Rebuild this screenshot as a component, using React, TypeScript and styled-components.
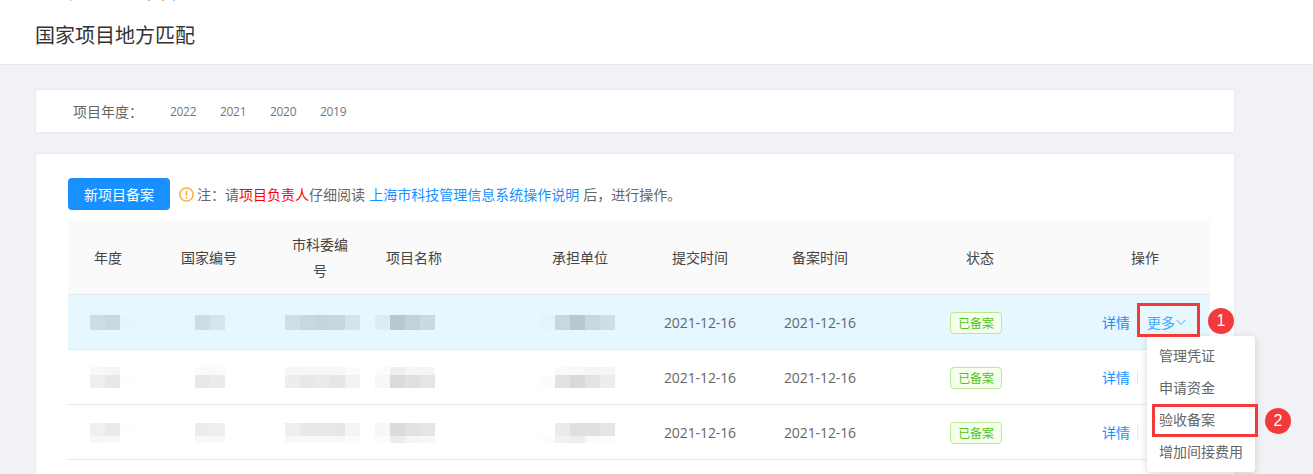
import React from "react";
import styled, { createGlobalStyle } from "styled-components";

const GlobalStyle = createGlobalStyle`
  html, body {
    margin: 0;
    padding: 0;
    height: 474px;
    overflow: hidden;
    background: #f0f2f5;
    font-family: "Noto Sans CJK SC", "Open Sans", sans-serif;
    font-size: 14px;
    color: #666;
  }
  * { box-sizing: border-box; }
`;

const COLUMNS = "80px 122px 100px 150px 120px 120px 120px 200px 130px";

const PageHeader = styled.header`
  height: 65px;
  background: #fff;
  border-bottom: 1px solid #e8e8e8;
  padding: 21px 35px 0;
`;

const Title = styled.h1`
  margin: 0;
  font-size: 20px;
  font-weight: 400;
  line-height: 28px;
  color: #333;
`;

const Content = styled.main`
  width: 1200px;
  margin: 24px 0 0 35px;
  display: flex;
  flex-direction: column;
  gap: 20px;
`;

const FilterCard = styled.section`
  height: 44px;
  background: #fff;
  border: 1px solid #e8eaed;
  border-radius: 2px;
  display: flex;
  align-items: center;
  padding-left: 37px;
`;

const FilterLabel = styled.span`
  width: 97px;
  color: #666;
`;

const YearList = styled.div`
  display: flex;
  font-family: "Open Sans", sans-serif;
  font-size: 12px;
  letter-spacing: -0.3px;
  color: #777;
`;

const Year = styled.span`
  width: 50px;
`;

const TableCard = styled.section`
  background: #fff;
  border: 1px solid #e8eaed;
  border-radius: 2px;
  padding: 24px 24px 40px 32px;
  height: 331px;
`;

const Toolbar = styled.div`
  height: 32px;
  display: flex;
  align-items: center;
  margin-bottom: 10px;
`;

const PrimaryButton = styled.button`
  width: 102px;
  height: 32px;
  border: 0;
  border-radius: 4px;
  background: #1890ff;
  color: #fff;
  font: inherit;
  margin-right: 10px;
  padding: 0;
`;

const Notice = styled.div`
  display: flex;
  align-items: center;
  gap: 3px;
  color: #666;
  word-spacing: 1px;
`;

const Highlight = styled.span<{ $color: string }>`
  color: ${(p) => p.$color};
`;

const HeadRow = styled.div`
  display: grid;
  grid-template-columns: ${COLUMNS};
  height: 75px;
  background: #fafafa;
  border-bottom: 1px solid #e8e8e8;
  color: #444;
`;

const HeadCell = styled.div<{ $left?: boolean; $inset?: number }>`
  display: flex;
  align-items: center;
  justify-content: ${(p) => (p.$left ? "flex-start" : "center")};
  text-align: center;
  line-height: 26px;
  padding: 0 ${(p) => p.$inset ?? 0}px;
  padding-right: ${(p) => (p.$left ? 0 : p.$inset ?? 0)}px;
`;

const Row = styled.div<{ $active?: boolean }>`
  display: grid;
  grid-template-columns: ${COLUMNS};
  height: 55px;
  background: ${(p) => (p.$active ? "#e6f7ff" : "#fff")};
  border-bottom: 1px solid #e8e8e8;
`;

const Cell = styled.div<{ $inset?: number }>`
  display: flex;
  align-items: center;
  justify-content: ${(p) => (p.$inset === undefined ? "center" : "flex-start")};
  padding-left: ${(p) => p.$inset ?? 0}px;
  padding-top: 1px;
  font-family: "Open Sans", sans-serif;
  letter-spacing: -0.1px;
  color: #666;
`;

const Mosaic = styled.div<{ $cols: number; $tracks: string }>`
  display: grid;
  grid-template-columns: repeat(${(p) => p.$cols}, 15px);
  grid-template-rows: ${(p) => p.$tracks};
`;

const Pixel = styled.span<{ $color: string }>`
  background: ${(p) => p.$color};
`;

const Tag = styled.span`
  width: 52px;
  height: 22px;
  margin-right: 8px;
  border: 1px solid #b7eb8f;
  border-radius: 4px;
  background: #f6ffed;
  color: #52c41a;
  font-family: "Noto Sans CJK SC", sans-serif;
  font-size: 12px;
  line-height: 20px;
  text-align: center;
`;

const ActionCell = styled.div`
  position: relative;
  display: flex;
  align-items: center;
  padding-left: 22px;
`;

const LinkText = styled.a`
  color: #1890ff;
  font-family: "Noto Sans CJK SC", sans-serif;
`;

const Divider = styled.span`
  width: 1px;
  height: 14px;
  margin-left: 7px;
  background: #e8e8e8;
`;

const MoreLink = styled(LinkText)`
  display: flex;
  align-items: center;
  margin-left: 17px;
  color: #40a9ff;
`;

const Menu = styled.ul`
  position: absolute;
  z-index: 2;
  left: 67px;
  top: 41px;
  width: 108px;
  height: 136px;
  margin: 0;
  padding: 3px 0;
  list-style: none;
  background: #fff;
  border-radius: 4px;
  box-shadow: 0 2px 8px rgba(0, 0, 0, 0.15);
`;

const MenuItem = styled.li`
  height: 32px;
  line-height: 32px;
  padding-left: 12px;
  color: #666;
  white-space: nowrap;
`;

const Callout = styled.span<{ $x: number; $y: number; $w: number; $h: number }>`
  position: absolute;
  z-index: 3;
  left: ${(p) => p.$x}px;
  top: ${(p) => p.$y}px;
  width: ${(p) => p.$w}px;
  height: ${(p) => p.$h}px;
  border: 3px solid #f33a3a;
`;

const Badge = styled.span<{ $x: number; $y: number }>`
  position: absolute;
  z-index: 3;
  left: ${(p) => p.$x}px;
  top: ${(p) => p.$y}px;
  width: 26px;
  height: 26px;
  border-radius: 50%;
  background: #f33a3a;
  color: #fff;
  font-family: "Liberation Sans", sans-serif;
  font-size: 16px;
  line-height: 26px;
  text-align: center;
`;

// cut off text from the scrolled page above, only its last pixels show
const TopMarks = styled.div`
  position: absolute;
  left: 70px;
  top: 0;
  width: 106px;
  height: 1px;
  background: linear-gradient(
    to right,
    #f5cf9c 0 2px,
    transparent 2px 78px,
    #c79be0 78px 80px,
    transparent 80px 92px,
    #e0b070 92px 94px,
    transparent 94px 103px,
    #a8cdf0 103px 105px,
    transparent 105px
  );
`;

const Chevron = () => (
  <svg width="10" height="10" viewBox="0 0 10 10" fill="none" stroke="#40a9ff" strokeWidth="0.9" style={{ marginLeft: 1 }}>
    <path d="M0.8 3 L5 7.4 L9.2 3" />
  </svg>
);

const InfoIcon = () => (
  <svg width="15" height="15" viewBox="0 0 15 15" fill="none" stroke="#fbb03b" strokeWidth="1.5" style={{ marginLeft: -1 }}>
    <circle cx="7.5" cy="7.5" r="6.6" />
    <path d="M7.5 3.6 V8.8" strokeWidth="1.6" />
    <path d="M7.5 10 V11.6" strokeWidth="1.6" />
  </svg>
);

type Blur = { cols: number; inset: number; colors: string[] };

const rows: { active?: boolean; tracks: string; blurs: Blur[] }[] = [
  {
    active: true,
    tracks: "15px",
    blurs: [
      { cols: 3, inset: 22, colors: ["#cddde6", "#c9d8e3", "#e3f5fd"] },
      { cols: 2, inset: 47, colors: ["#cbdde6", "#d3e5ed"] },
      { cols: 5, inset: 15, colors: ["#cfdfe5", "#c7d8df", "#c3d6e0", "#c8d7df", "#d3e4ec"] },
      { cols: 4, inset: 5, colors: ["#dcecf4", "#b8c7d1", "#c3d2d9", "#c8dae3"] },
      { cols: 5, inset: 20, colors: ["#e3f4fc", "#c8d7e0", "#b9c8ce", "#c8d8e1", "#cedee7"] },
    ],
  },
  {
    tracks: "8px 13px",
    blurs: [
      { cols: 3, inset: 22, colors: ["#f8f8f7", "#f5f5f5", "#fff", "#eeeeed", "#e9e7e8", "#fdfefe"] },
      { cols: 2, inset: 47, colors: ["#f9fafa", "#f9fafa", "#e9e8e8", "#ebebeb"] },
      { cols: 5, inset: 15, colors: ["#f7f7f7", "#f7f7f6", "#f6f7f7", "#f6f6f5", "#fbfbfb", "#eeedeb", "#e9e8e6", "#e9eaec", "#e8e6e3", "#f1f2f4"] },
      { cols: 4, inset: 5, colors: ["#fcfcfb", "#f0eff0", "#f6f6f6", "#f5f5f5", "#f8f7f5", "#dcdadd", "#e1e0e1", "#e5e5e3"] },
      { cols: 5, inset: 20, colors: ["#fff", "#f9f9f9", "#f8f8f7", "#f6f5f4", "#f5f5f5", "#fcfcfc", "#e2e2e1", "#d9d9d7", "#e3e3e3", "#ecedee"] },
    ],
  },
  {
    tracks: "13px 7px",
    blurs: [
      { cols: 3, inset: 22, colors: ["#f0f0f0", "#ebe9eb", "#fefefe", "#f7f7f7", "#f8f8f8", "#fff"] },
      { cols: 2, inset: 47, colors: ["#ececec", "#eeeef0", "#f8f8f8", "#f9f9f9"] },
      { cols: 5, inset: 15, colors: ["#eeeeed", "#e9e9e8", "#e8e9eb", "#e8e7e5", "#f3f4f3", "#f8f8f8", "#f8f8f8", "#f8f8f8", "#f8f8f8", "#fbfbfb"] },
      { cols: 4, inset: 5, colors: ["#f8f7f5", "#dcdadf", "#e3e2e3", "#e5e5e5", "#fcfcfc", "#ececed", "#f5f5f5", "#f7f7f7"] },
      { cols: 5, inset: 20, colors: ["#fff", "#ebebeb", "#e0e0df", "#e0e0e2", "#e4e5e7", "#fcfcfc", "#f1f1f1", "#efeeec", "#f9fafa", "#fbfdfc"] },
    ],
  },
];

const Page = styled.div`
  position: relative;
  width: 1313px;
  height: 474px;
  overflow: hidden;
`;

export default function App() {
  return (
    <Page>
      <GlobalStyle />
      <TopMarks />
      <PageHeader>
        <Title>国家项目地方匹配</Title>
      </PageHeader>
      <Content>
        <FilterCard>
          <FilterLabel>项目年度：</FilterLabel>
          <YearList>
            <Year>2022</Year>
            <Year>2021</Year>
            <Year>2020</Year>
            <Year>2019</Year>
          </YearList>
        </FilterCard>
        <TableCard>
          <Toolbar>
            <PrimaryButton>新项目备案</PrimaryButton>
            <Notice>
              <InfoIcon />
              <span>
                注：请<Highlight $color="#ff0000">项目负责人</Highlight>仔细阅读{" "}
                <Highlight $color="#1890ff">上海市科技管理信息系统操作说明</Highlight> 后，进行操作。
              </span>
            </Notice>
          </Toolbar>
          <HeadRow>
            <HeadCell>年度</HeadCell>
            <HeadCell>国家编号</HeadCell>
            <HeadCell $inset={20}>市科委编号</HeadCell>
            <HeadCell $left $inset={16}>项目名称</HeadCell>
            <HeadCell>承担单位</HeadCell>
            <HeadCell>提交时间</HeadCell>
            <HeadCell>备案时间</HeadCell>
            <HeadCell>状态</HeadCell>
            <HeadCell>操作</HeadCell>
          </HeadRow>
          {rows.map((row, i) => (
            <Row key={i} $active={row.active}>
              {row.blurs.map((b, j) => (
                <Cell key={j} $inset={b.inset}>
                  <Mosaic $cols={b.cols} $tracks={row.tracks}>
                    {b.colors.map((c, k) => (
                      <Pixel key={k} $color={c} />
                    ))}
                  </Mosaic>
                </Cell>
              ))}
              <Cell>2021-12-16</Cell>
              <Cell>2021-12-16</Cell>
              <Cell>
                <Tag>已备案</Tag>
              </Cell>
              <ActionCell>
                <LinkText>详情</LinkText>
                {row.active ? (
                  <>
                    <MoreLink>
                      更多
                      <Chevron />
                    </MoreLink>
                    <Menu>
                      <MenuItem>管理凭证</MenuItem>
                      <MenuItem>申请资金</MenuItem>
                      <MenuItem>验收备案</MenuItem>
                      <MenuItem>增加间接费用</MenuItem>
                    </Menu>
                  </>
                ) : (
                  <Divider />
                )}
              </ActionCell>
            </Row>
          ))}
        </TableCard>
      </Content>
      <Callout $x={1137} $y={303} $w={63} $h={34} />
      <Badge $x={1208} $y={308}>1</Badge>
      <Callout $x={1152} $y={404} $w={106} $h={33} />
      <Badge $x={1265} $y={408}>2</Badge>
    </Page>
  );
}
